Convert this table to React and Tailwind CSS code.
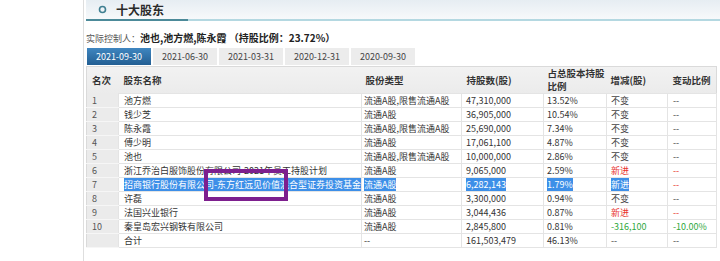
import React from 'react';

const rows = [
    { n: '1', name: '池方燃', type: '流通A股,限售流通A股', qty: '47,310,000', pct: '13.52%', chg: '不变', ratio: '--' },
    { n: '2', name: '钱少芝', type: '流通A股', qty: '36,905,000', pct: '10.54%', chg: '不变', ratio: '--' },
    { n: '3', name: '陈永霞', type: '流通A股,限售流通A股', qty: '25,690,000', pct: '7.34%', chg: '不变', ratio: '--' },
    { n: '4', name: '傅少明', type: '流通A股', qty: '17,061,100', pct: '4.87%', chg: '不变', ratio: '--' },
    { n: '5', name: '池也', type: '流通A股,限售流通A股', qty: '10,000,000', pct: '2.86%', chg: '不变', ratio: '--' },
    { n: '6', name: '浙江乔治白服饰股份有限公司-2021年员工持股计划', type: '流通A股', qty: '9,065,000', pct: '2.59%', chg: '新进', ratio: '--', tone: 'red' },
    { n: '7', name: '招商银行股份有限公司-东方红远见价值混合型证券投资基金', type: '流通A股', qty: '6,282,143', pct: '1.79%', chg: '新进', ratio: '--', tone: 'red', selected: true },
    { n: '8', name: '许磊', type: '流通A股', qty: '3,300,000', pct: '0.94%', chg: '不变', ratio: '--' },
    { n: '9', name: '法国兴业银行', type: '流通A股', qty: '3,044,436', pct: '0.87%', chg: '新进', ratio: '--', tone: 'red' },
    { n: '10', name: '秦皇岛宏兴钢铁有限公司', type: '流通A股', qty: '2,845,800', pct: '0.81%', chg: '-316,100', ratio: '-10.00%', tone: 'green' },
    { n: '', name: '合计', type: '--', qty: '161,503,479', pct: '46.13%', chg: '--', ratio: '--' },
];

const tabs = ['2021-09-30', '2021-06-30', '2021-03-31', '2020-12-31', '2020-09-30'];

function Sel({ on, children }) {
    if (!on) return children;
    return <span className="bg-[#3d8fe8] text-white">{children}</span>;
}

export default function App() {
    const toneCls = (tone) => (tone === 'red' ? 'text-[#e8322c]' : tone === 'green' ? 'text-[#2ea83c]' : 'text-[#444]');

    return (
        <div className="relative w-[720px] h-[261px] bg-white flex overflow-hidden font-['Noto_Sans_CJK_SC',sans-serif] text-[#333]">
            <div className="w-[84px] shrink-0 border-r border-[#dedede]" />

            <div className="flex-1 pl-[2px] flex flex-col">
                {/* section title */}
                <div className="h-[19px] flex items-center pl-[12px] bg-gradient-to-b from-[#e6edf2] to-[#f7f9fb]">
                    <svg width="9" height="9" viewBox="0 0 9 9" className="mr-[9px]">
                        <circle cx="4.5" cy="4.5" r="3" fill="none" stroke="#3f7f91" strokeWidth="1.6" />
                    </svg>
                    <span className="text-[12px] leading-[19px] font-semibold text-[#2b2b2b]">十大股东</span>
                </div>
                <div className="flex h-[2px]">
                    <div className="w-[102px] bg-[#4c8a99]" />
                    <div className="flex-1 bg-[#b4d8e1]" />
                </div>

                <div className="mt-[11px] h-[12px] text-[9px] leading-[12px] whitespace-nowrap">
                    <span className="text-[#555]">实际控制人：</span>
                    <span className="text-[10px] font-bold text-[#222]">池也,池方燃,陈永霞 （持股比例：23.72%）</span>
                </div>

                <div className="mt-[4px] flex gap-[2px] pl-[1px]">
                    {tabs.map((t, i) => (
                        <div
                            key={t}
                            className={
                                i === 0
                                    ? 'w-[64px] h-[17px] flex items-center justify-center text-[9px] text-white bg-gradient-to-b from-[#3f86c0] to-[#235f93]'
                                    : 'w-[64px] h-[17px] flex items-center justify-center text-[9px] text-[#444] bg-[#ececec]'
                            }
                        >
                            {t}
                        </div>
                    ))}
                </div>

                <table className="mt-[1px] w-[630px] table-fixed border-collapse border border-[#dadada] text-[9px] leading-[13px]">
                    <colgroup>
                        <col className="w-[32px]" />
                        <col className="w-[243px]" />
                        <col className="w-[100px]" />
                        <col className="w-[82px]" />
                        <col className="w-[63px]" />
                        <col className="w-[61px]" />
                        <col className="w-[49px]" />
                    </colgroup>
                    <thead>
                        <tr className="h-[26px] bg-gradient-to-b from-[#f2f2f2] to-[#ebebeb] text-[9.5px] leading-[13px] font-bold text-[#333] text-left">
                            <th className="pl-[5px] pr-0 font-bold">名次</th>
                            <th className="pl-[5px] pr-0 font-bold">股东名称</th>
                            <th className="pl-[4px] pr-0 font-bold">股份类型</th>
                            <th className="pl-[5px] pr-0 font-bold">持股数(股)</th>
                            <th className="pl-[4px] pr-0 font-bold">占总股本持股比例</th>
                            <th className="pl-[4px] pr-0 font-bold whitespace-nowrap">增减(股)</th>
                            <th className="pl-[5px] pr-0 font-bold whitespace-nowrap">变动比例</th>
                        </tr>
                    </thead>
                    <tbody>
                        {rows.map((r, i) => (
                            <tr key={i} className="h-[14px]">
                                <td className="px-[5px] bg-[#ebebeb] text-[#555] border-b border-[#f6f6f6]">{r.n}</td>
                                <td className="px-[5px] border border-[#e4e4e4] whitespace-nowrap overflow-hidden">
                                    <Sel on={r.selected}>{r.name}</Sel>
                                </td>
                                <td className="px-[2px] border border-[#e4e4e4] whitespace-nowrap">
                                    <Sel on={r.selected}>{r.type}</Sel>
                                </td>
                                <td className="px-[4px] border border-[#e4e4e4]">
                                    <Sel on={r.selected}>{r.qty}</Sel>
                                </td>
                                <td className="px-[3px] border border-[#e4e4e4]">
                                    <Sel on={r.selected}>{r.pct}</Sel>
                                </td>
                                <td className={`px-[4px] border border-[#e4e4e4] ${r.selected ? '' : toneCls(r.tone)}`}>
                                    <Sel on={r.selected}>{r.chg}</Sel>
                                </td>
                                <td className={`px-[5px] border border-[#e4e4e4] whitespace-nowrap ${toneCls(r.tone)}`}>{r.ratio}</td>
                            </tr>
                        ))}
                    </tbody>
                </table>
            </div>

            {/* annotation box drawn over the selection */}
            <div className="absolute left-[204px] top-[169px] w-[84px] h-[32px] border-[4px] border-[#7d1f8e]" />
        </div>
    );
}
